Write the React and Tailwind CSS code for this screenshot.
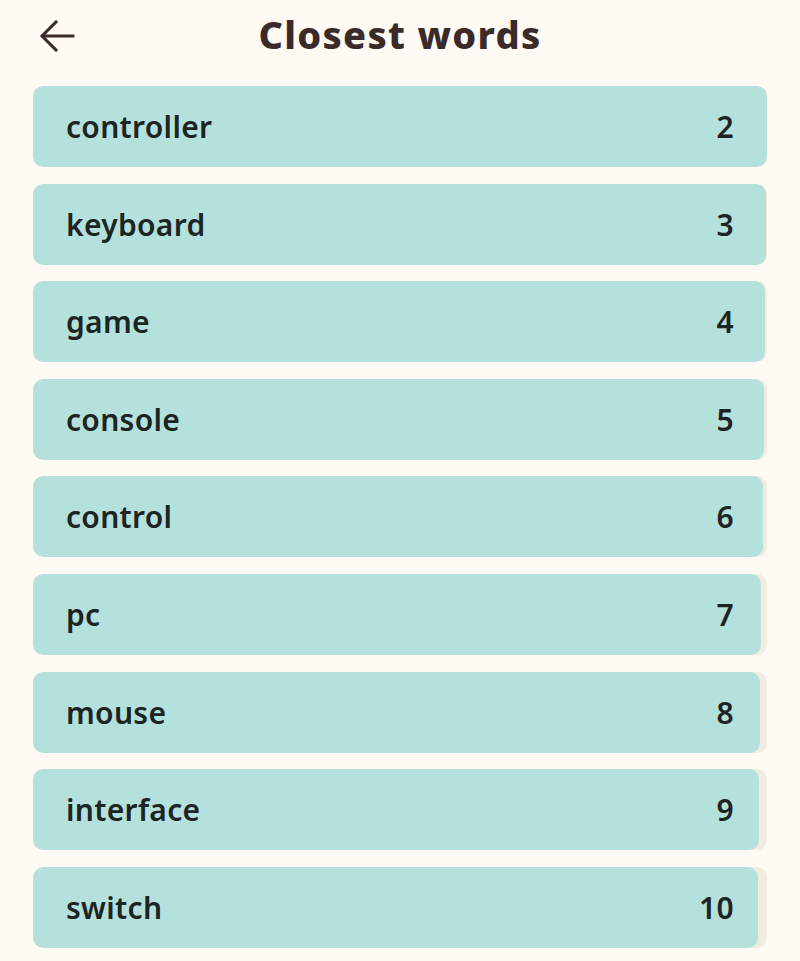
import React from 'react';

const words = [
  { word: 'controller', rank: 2, score: 100 },
  { word: 'keyboard', rank: 3, score: 99.85 },
  { word: 'game', rank: 4, score: 99.7 },
  { word: 'console', rank: 5, score: 99.55 },
  { word: 'control', rank: 6, score: 99.4 },
  { word: 'pc', rank: 7, score: 99.25 },
  { word: 'mouse', rank: 8, score: 99.1 },
  { word: 'interface', rank: 9, score: 98.95 },
  { word: 'switch', rank: 10, score: 98.8 },
];

const BackArrow = () => (
  <svg width="36" height="32" viewBox="0 0 36 32" fill="none" stroke="#3b2a2a" strokeWidth="3" strokeLinecap="square">
    <path d="M34 16H4" />
    <path d="M17 2L3 16l14 14" />
  </svg>
);

const WordRow = ({ word, rank, score }) => (
  <div className="relative h-[81px] rounded-[10px] bg-[#f2ebdf] overflow-hidden">
    <div className="absolute inset-y-0 left-0 rounded-[10px] bg-[#b4e1dc]" style={{ width: `${score}%` }} />
    <div className="relative flex h-full items-center justify-between px-[33px] text-[30px] font-semibold tracking-[0.3px] text-[#1c2424]">
      <span>{word}</span>
      <span>{rank}</span>
    </div>
  </div>
);

export default function App() {
  return (
    <div className="min-h-[961px] bg-[#fffaf3] px-[33px]" style={{ fontFamily: '"Noto Sans", Lato, sans-serif' }}>
      <header className="relative flex h-[86px] items-center justify-center pb-[18px]">
        <button className="absolute left-[6px] top-[20px]">
          <BackArrow />
        </button>
        <h1 className="text-[38px] font-extrabold tracking-[1.3px] text-[#3b2a2a]">Closest words</h1>
      </header>
      <div className="flex flex-col gap-[16.6px]">
        {words.map((w) => (
          <WordRow key={w.word} {...w} />
        ))}
      </div>
    </div>
  );
}
